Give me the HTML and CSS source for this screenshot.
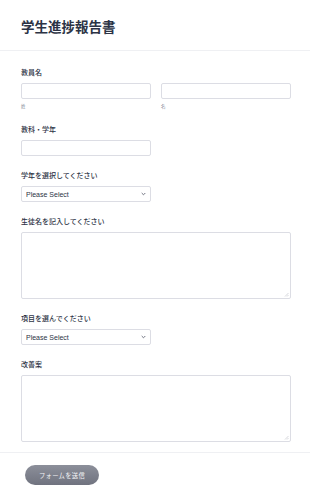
FILE: index.html
```html
<!DOCTYPE html>
<html lang="ja">
<head>
    <meta charset="UTF-8">
    <meta name="viewport" content="width=device-width, initial-scale=1.0">
    <title>学生進捗報告書</title>
    <link rel="stylesheet" href="styles.css">
</head>
<body>
    <header class="form-header">
        <h1>学生進捗報告書</h1>
    </header>

    <form class="form-body">
        <div class="field">
            <label class="field-label">教員名</label>
            <div class="name-row">
                <div class="name-part">
                    <input type="text" class="text-input">
                    <span class="sub-label">姓</span>
                </div>
                <div class="name-part">
                    <input type="text" class="text-input">
                    <span class="sub-label">名</span>
                </div>
            </div>
        </div>

        <div class="field">
            <label class="field-label">教科・学年</label>
            <input type="text" class="text-input">
        </div>

        <div class="field">
            <label class="field-label">学年を選択してください</label>
            <div class="select-wrap">
                <select class="dropdown">
                    <option>Please Select</option>
                </select>
                <svg class="chevron" width="5" height="4" viewBox="0 0 5 4">
                    <path d="M0.7 1 L2.5 2.8 L4.3 1" fill="none" stroke="#6f7380" stroke-width="1"/>
                </svg>
            </div>
        </div>

        <div class="field">
            <label class="field-label">生徒名を記入してください</label>
            <div class="area-wrap">
                <textarea class="text-area"></textarea>
                <svg class="grip" width="5" height="5" viewBox="0 0 5 5">
                    <path d="M4.5 1 L1 4.5 M4.5 3 L3 4.5" stroke="#c4c6cd" stroke-width="0.7"/>
                </svg>
            </div>
        </div>

        <div class="field">
            <label class="field-label">項目を選んでください</label>
            <div class="select-wrap">
                <select class="dropdown">
                    <option>Please Select</option>
                </select>
                <svg class="chevron" width="5" height="4" viewBox="0 0 5 4">
                    <path d="M0.7 1 L2.5 2.8 L4.3 1" fill="none" stroke="#6f7380" stroke-width="1"/>
                </svg>
            </div>
        </div>

        <div class="field">
            <label class="field-label">改善案</label>
            <div class="area-wrap">
                <textarea class="text-area"></textarea>
                <svg class="grip" width="5" height="5" viewBox="0 0 5 5">
                    <path d="M4.5 1 L1 4.5 M4.5 3 L3 4.5" stroke="#c4c6cd" stroke-width="0.7"/>
                </svg>
            </div>
        </div>
    </form>

    <div class="form-footer">
        <button type="button" class="submit-btn">フォームを送信</button>
    </div>
</body>
</html>
```

FILE: styles.css
```css
body {
    margin: 0;
    background-color: #fff;
    font-family: "Inter", "Noto Sans CJK JP", sans-serif;
    color: #2c3345;
}
.form-header {
    height: 51px;
    box-sizing: border-box;
    padding: 18px 21px 0;
    border-bottom: 1px solid #eff0f3;
}
.form-header h1 {
    margin: 0;
    font-size: 13.5px;
    line-height: 19px;
    font-weight: 700;
    color: #2c3345;
}
.form-body {
    display: flex;
    flex-direction: column;
    gap: 15px;
    padding: 17px 19px 10px 21px;
    border-bottom: 1px solid #eff0f3;
}
.field {
    display: flex;
    flex-direction: column;
    align-items: flex-start;
}
.field-label {
    font-size: 7px;
    line-height: 9px;
    font-weight: 500;
    margin-bottom: 6px;
    color: #2c3345;
}
.name-row {
    display: flex;
    gap: 10px;
}
.name-part {
    display: flex;
    flex-direction: column;
    width: 130px;
}
.sub-label {
    font-size: 4.5px;
    line-height: 7px;
    margin-top: 4px;
    color: #8a8d99;
}
.text-input {
    display: block;
    box-sizing: border-box;
    width: 130px;
    height: 16px;
    margin: 0;
    border: 1px solid #dcdde4;
    border-radius: 2px;
    background: #fff;
}
.select-wrap {
    position: relative;
    width: 130px;
    height: 16px;
}
.dropdown {
    display: block;
    appearance: none;
    box-sizing: border-box;
    width: 130px;
    height: 16px;
    margin: 0;
    padding: 0 0 0 4px;
    border: 1px solid #dcdde4;
    border-radius: 2px;
    background: #fff;
    font-family: "Liberation Sans", Arial, sans-serif;
    font-size: 7px;
    color: #2c3345;
}
.chevron {
    position: absolute;
    right: 5px;
    top: 6px;
}
.area-wrap {
    position: relative;
    width: 270px;
    height: 67px;
}
.text-area {
    display: block;
    box-sizing: border-box;
    width: 270px;
    height: 67px;
    margin: 0;
    border: 1px solid #dcdde4;
    border-radius: 2px;
    background: #fff;
    resize: none;
}
.grip {
    position: absolute;
    right: 2px;
    bottom: 2px;
}
.form-footer {
    padding: 12px 25px;
}
.submit-btn {
    display: block;
    width: 74px;
    height: 20px;
    border: none;
    border-radius: 10px;
    background: linear-gradient(#8c8f9a, #70737f);
    color: #f3f4f6;
    font-family: "Noto Sans CJK JP", sans-serif;
    font-size: 6.3px;
    letter-spacing: 0.3px;
    cursor: pointer;
}
```
